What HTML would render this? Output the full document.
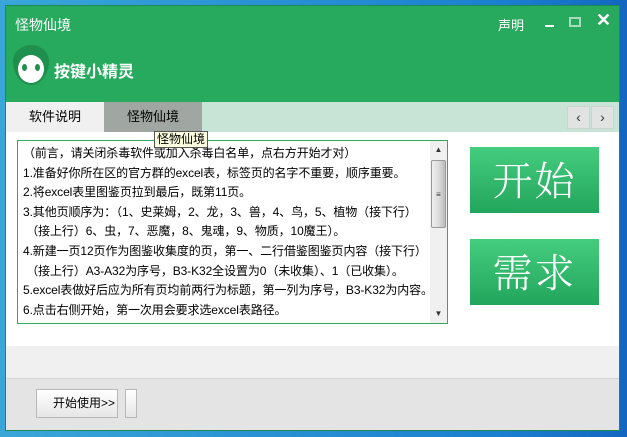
<!DOCTYPE html>
<html><head><meta charset="utf-8"><style>
*{margin:0;padding:0;box-sizing:border-box}
body{width:627px;height:437px;overflow:hidden;position:relative;background:linear-gradient(90deg,#3aa6d8,#1b7fd0 80%,#1466c0);font-family:"Liberation Sans","Noto Sans CJK SC",sans-serif}
.a{position:absolute}
.win{left:5px;top:5px;width:615px;height:426px;background:#fff;border:1px solid #1d8a50}
.title{left:0;top:0;width:613px;height:96px;background:#27aa5e;color:#fff}
.t{font-size:13px;color:#000}
.tabs{left:0;top:96px;width:613px;height:30px;background:#c8e4d6}
.arr{width:23px;height:23px;top:4px;background:#e0e3e1;border:1px solid #cfd3d0;font-size:14px;text-align:center;line-height:20px;color:#333}
.box{left:11px;top:134px;width:431px;height:184px;border:1px solid #2eaa62;background:#fff}
.lines{left:5px;top:3px;font-size:12px;line-height:19.6px;color:#000;white-space:nowrap;letter-spacing:-0.1px}
.gbtn{width:129px;height:66px;background:linear-gradient(#45cd7f,#22a55c);color:#fff;font-family:"Noto Serif CJK SC",serif;font-size:40px;text-align:center;line-height:64px;letter-spacing:2px;font-weight:300}
</style></head><body>
<div class="a win">
 <div class="a title">
  <div class="a" style="left:9px;top:9px;font-size:14px">怪物仙境</div>
  <div class="a" style="left:492px;top:9px;font-size:13px">声明</div>
  <div class="a" style="left:539px;top:19px;width:9px;height:2px;background:#fff"></div>
  <div class="a" style="left:563px;top:11px;width:12px;height:10px;border:2px solid #a8dcbc"></div>
  <div class="a" style="left:590px;top:4px;font-size:18px;font-weight:bold">✕</div>
  <div class="a" style="left:7px;top:39px;width:36px;height:40px;border-radius:50% 50% 50% 50%/40% 40% 60% 60%;background:#1e8f4c"></div>
  <div class="a" style="left:12px;top:49px;width:26px;height:28px;border-radius:50%;background:#fff"></div>
  <div class="a" style="left:16px;top:58px;width:5px;height:7px;border-radius:50%;background:#1e8f4c"></div>
  <div class="a" style="left:29px;top:58px;width:5px;height:7px;border-radius:50%;background:#1e8f4c"></div>
  <div class="a" style="left:48px;top:52px;font-size:16px;font-weight:bold">按键小精灵</div>
 </div>
 <div class="a tabs">
  <div class="a t" style="left:0;top:0;width:98px;height:30px;background:#f0f0f0;text-align:center;line-height:30px">软件说明</div>
  <div class="a t" style="left:98px;top:0;width:98px;height:30px;background:#a0a6a2;text-align:center;line-height:30px">怪物仙境</div>
  <div class="a arr" style="left:561px">‹</div>
  <div class="a arr" style="left:585px">›</div>
 </div>
 <div class="a box">
  <div class="a lines">（前言，请关闭杀毒软件或加入杀毒白名单，点右方开始才对）<br>1.准备好你所在区的官方群的excel表，标签页的名字不重要，顺序重要。<br>2.将excel表里图鉴页拉到最后，既第11页。<br>3.其他页顺序为：（1、史莱姆，2、龙，3、兽，4、鸟，5、植物（接下行）<br>&nbsp;（接上行）6、虫，7、恶魔，8、鬼魂，9、物质，10魔王）。<br>4.新建一页12页作为图鉴收集度的页，第一、二行借鉴图鉴页内容（接下行）<br>&nbsp;（接上行）A3-A32为序号，B3-K32全设置为0（未收集）、1（已收集）。<br>5.excel表做好后应为所有页均前两行为标题，第一列为序号，B3-K32为内容。<br>6.点击右侧开始，第一次用会要求选excel表路径。</div>
  <div class="a" style="left:412px;top:0;width:17px;height:182px;background:#f0f0f0;font-size:8px;text-align:center;color:#333">
   <div style="margin-top:4px">▲</div>
   <div class="a" style="left:1px;top:19px;width:15px;height:68px;border:1px solid #999;border-radius:2px;background:linear-gradient(90deg,#eee,#ddd,#bbb);line-height:68px">≡</div>
   <div class="a" style="left:0;top:168px;width:17px">▼</div>
  </div>
 </div>
 <div class="a t" style="left:148px;top:125px;background:#ffffe1;border:1px solid #555;font-size:12px;padding:0 2px;line-height:15px">怪物仙境</div>
 <div class="a gbtn" style="left:464px;top:141px">开始</div>
 <div class="a gbtn" style="left:464px;top:233px">需求</div>
 <div class="a" style="left:0;top:340px;width:613px;height:32px;background:#f0f0f0"></div>
 <div class="a" style="left:0;top:372px;width:613px;height:52px;background:#e4e4e4;border-top:1px solid #d6d6d6"></div>
 <div class="a t" style="left:30px;top:383px;width:82px;height:29px;background:linear-gradient(#fff,#e6e6e6);border:1px solid #b8b8b8;font-size:12px;line-height:27px;text-align:right;padding-right:2px">开始使用&gt;&gt;</div>
 <div class="a" style="left:119px;top:383px;width:12px;height:29px;background:linear-gradient(#fff,#e6e6e6);border:1px solid #b8b8b8"></div>
</div>
</body></html>
